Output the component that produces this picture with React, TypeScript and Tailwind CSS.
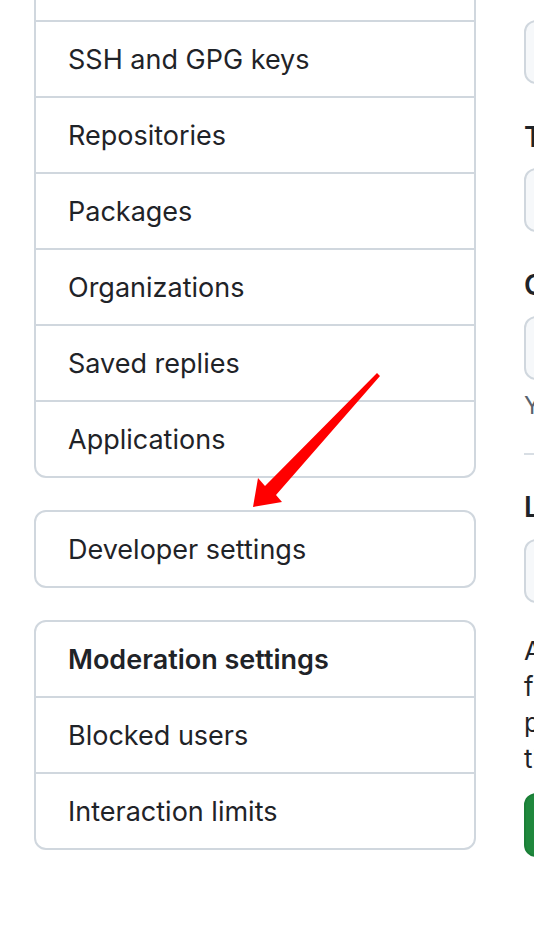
const navTop = ["Security", "SSH and GPG keys", "Repositories", "Packages", "Organizations", "Saved replies", "Applications"];

const moderation = ["Blocked users", "Interaction limits"];

const Row = ({ label, bold, last }: { label: string; bold?: boolean; last?: boolean }) => (
  <div
    className={`flex items-center pl-8 pt-[2px] text-[27px] text-[#1f2328] ${bold ? "font-semibold" : ""} ${last ? "h-[74px]" : "h-[76px] border-b-2 border-[#d0d7de]"}`}
  >
    <span className="whitespace-nowrap">{label}</span>
  </div>
);

const Field = () => (
  <div className="h-16 w-[600px] rounded-xl border-2 border-[#d0d7de] bg-[#f6f8fa]" />
);

const Label = ({ text, className }: { text: string; className?: string }) => (
  <div className={`h-9 leading-9 text-[28px] font-semibold text-[#1f2328] whitespace-nowrap ${className ?? ""}`}>{text}</div>
);

export default function App() {
  return (
    <div className="relative w-[534px] h-[932px] overflow-hidden bg-white font-['Inter','Liberation_Sans',sans-serif]">
      <div className="flex">
        {/* sidebar */}
        <div className="ml-[34px] w-[442px] shrink-0 -mt-[56px] flex flex-col gap-8">
          <div className="rounded-xl border-2 border-[#d0d7de] overflow-hidden">
            {navTop.map((item, i) => (
              <Row key={item} label={item} last={i === navTop.length - 1} />
            ))}
          </div>
          <div className="rounded-xl border-2 border-[#d0d7de] overflow-hidden">
            <Row label="Developer settings" last />
          </div>
          <div className="rounded-xl border-2 border-[#d0d7de] overflow-hidden">
            <Row label="Moderation settings" bold />
            {moderation.map((item, i) => (
              <Row key={item} label={item} last={i === moderation.length - 1} />
            ))}
          </div>
        </div>

        {/* profile form */}
        <div className="ml-12 shrink-0 w-[600px] pt-5 flex flex-col">
          <Field />
          <Label text="Twitter username" className="mt-[35px] mb-[13px]" />
          <Field />
          <Label text="Company" className="mt-[35px] mb-[13px]" />
          <Field />
          <p className="mt-[10px] h-8 leading-8 text-[24px] text-[#59636e] whitespace-nowrap">
            You can @mention your company's GitHub organization to link it.
          </p>
          <div className="mt-[31px] h-[2px] bg-[#d8dee4]" />
          <Label text="Location" className="mt-[34px] mb-[14px]" />
          <Field />
          <div className="mt-[30px] text-[26px] leading-9 text-[#1f2328] whitespace-nowrap">
            <div>All of the fields on this page are optional and can be deleted at any time, and by</div>
            <div>filling them out, you're giving us consent to share this data wherever your user</div>
            <div>profile appears. Please see our privacy statement to learn more about how we use</div>
            <div>this information.</div>
          </div>
          <div className="mt-4 h-16 w-[220px] rounded-xl bg-[#1f883d] border-2 border-[#1a7f37]" />
        </div>
      </div>

      {/* annotation arrow */}
      <svg className="absolute left-0 top-0 pointer-events-none" width="534" height="932" viewBox="0 0 534 932">
        <polygon
          points="377,373 380,376 276,495 282,502 253,507 258,478 265,486"
          fill="#ff0000"
        />
      </svg>
    </div>
  );
}
